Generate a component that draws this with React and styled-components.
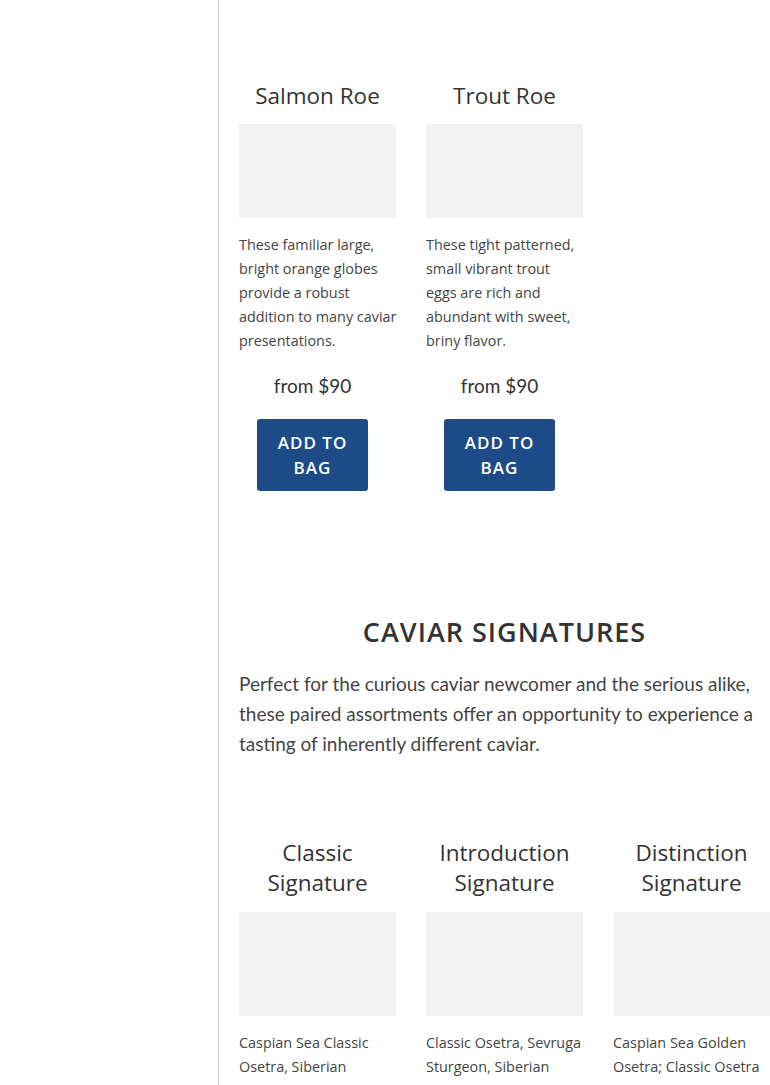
import React from "react";
import styled, { createGlobalStyle } from "styled-components";

const Global = createGlobalStyle`
  html, body { margin: 0; padding: 0; background: #fff; }
  body { font-family: "Lato", "Open Sans", sans-serif; color: #333; }
  * { box-sizing: border-box; }
`;

const Page = styled.div`
  display: flex;
  width: 770px;
  min-height: 1085px;
  overflow: hidden;
`;

const Sidebar = styled.aside`
  flex: 0 0 219px;
  border-right: 1px solid #cfcfcf;
`;

const Main = styled.main`
  flex: 0 0 531px;
  margin-left: 20px;
  padding-top: 81px;
`;

const Grid = styled.div`
  display: grid;
  grid-template-columns: repeat(3, 157px);
  column-gap: 30px;
`;

const Card = styled.div`
  display: flex;
  flex-direction: column;
  min-width: 0;
`;

const CardTitle = styled.h3`
  margin: 0;
  font-family: "Open Sans", sans-serif;
  font-weight: 400;
  font-size: 22.5px;
  line-height: 30px;
  text-align: center;
  color: #333;
`;

const Thumb = styled.div`
  margin-top: ${(p) => p.$gap}px;
  height: ${(p) => p.$h}px;
  background: #f2f2f2;
`;

const Desc = styled.p`
  margin: 15px -1px 0 0;
  font-family: "Open Sans", sans-serif;
  font-size: 14.4px;
  line-height: 24px;
  color: #444;
`;

const Buy = styled.div`
  display: flex;
  flex-direction: column;
  align-items: center;
  padding-right: 10px;
`;

const Price = styled.div`
  margin-top: 21px;
  font-size: 19px;
  line-height: 24px;
  color: #333;
`;

const Button = styled.button`
  margin-top: 21px;
  width: 111px;
  height: 72px;
  padding: 0 16px;
  border: none;
  border-radius: 3px;
  background: #1d4b87;
  color: #fff;
  font-family: "Open Sans", sans-serif;
  font-weight: 600;
  font-size: 17px;
  line-height: 25px;
  letter-spacing: 1px;
  text-transform: uppercase;
  cursor: pointer;
`;

const Section = styled.section`
  margin-top: 123px;
`;

const SectionTitle = styled.h2`
  margin: 0;
  font-family: "Open Sans", sans-serif;
  font-weight: 600;
  font-size: 27px;
  line-height: 36px;
  letter-spacing: 1px;
  text-align: center;
  text-transform: uppercase;
  color: #333;
`;

const Intro = styled.p`
  margin: 19px 0 0;
  font-size: 19px;
  line-height: 30px;
  color: #444;
`;

const Signatures = styled(Grid)`
  margin-top: 79px;
`;

const roes = [
  {
    title: "Salmon Roe",
    desc: "These familiar large, bright orange globes provide a robust addition to many caviar presentations.",
  },
  {
    title: "Trout Roe",
    desc: "These tight patterned, small vibrant trout eggs are rich and abundant with sweet, briny flavor.",
  },
];

const sigs = [
  {
    title: ["Classic", "Signature"],
    desc: "Caspian Sea Classic Osetra, Siberian Sturgeon, Paddlefish",
  },
  {
    title: ["Introduction", "Signature"],
    desc: "Classic Osetra, Sevruga Sturgeon, Siberian Sturgeon, Paddlefish",
  },
  {
    title: ["Distinction", "Signature"],
    desc: "Caspian Sea Golden Osetra; Classic Osetra and Siberian Sturgeon",
  },
];

export default function App() {
  return (
    <>
      <Global />
      <Page>
        <Sidebar />
        <Main>
          <Grid>
            {roes.map((r) => (
              <Card key={r.title}>
                <CardTitle>{r.title}</CardTitle>
                <Thumb $gap={13} $h={94} />
                <Desc>{r.desc}</Desc>
                <Buy>
                  <Price>from $90</Price>
                  <Button>Add to bag</Button>
                </Buy>
              </Card>
            ))}
          </Grid>
          <Section>
            <SectionTitle>Caviar Signatures</SectionTitle>
            <Intro>
              Perfect for the curious caviar newcomer and the serious alike, these paired
              assortments offer an opportunity to experience a tasting of inherently different
              caviar.
            </Intro>
          </Section>
          <Signatures>
            {sigs.map((s) => (
              <Card key={s.title[0]}>
                <CardTitle>
                  {s.title[0]}
                  <br />
                  {s.title[1]}
                </CardTitle>
                <Thumb $gap={14} $h={104} />
                <Desc>{s.desc}</Desc>
              </Card>
            ))}
          </Signatures>
        </Main>
      </Page>
    </>
  );
}
